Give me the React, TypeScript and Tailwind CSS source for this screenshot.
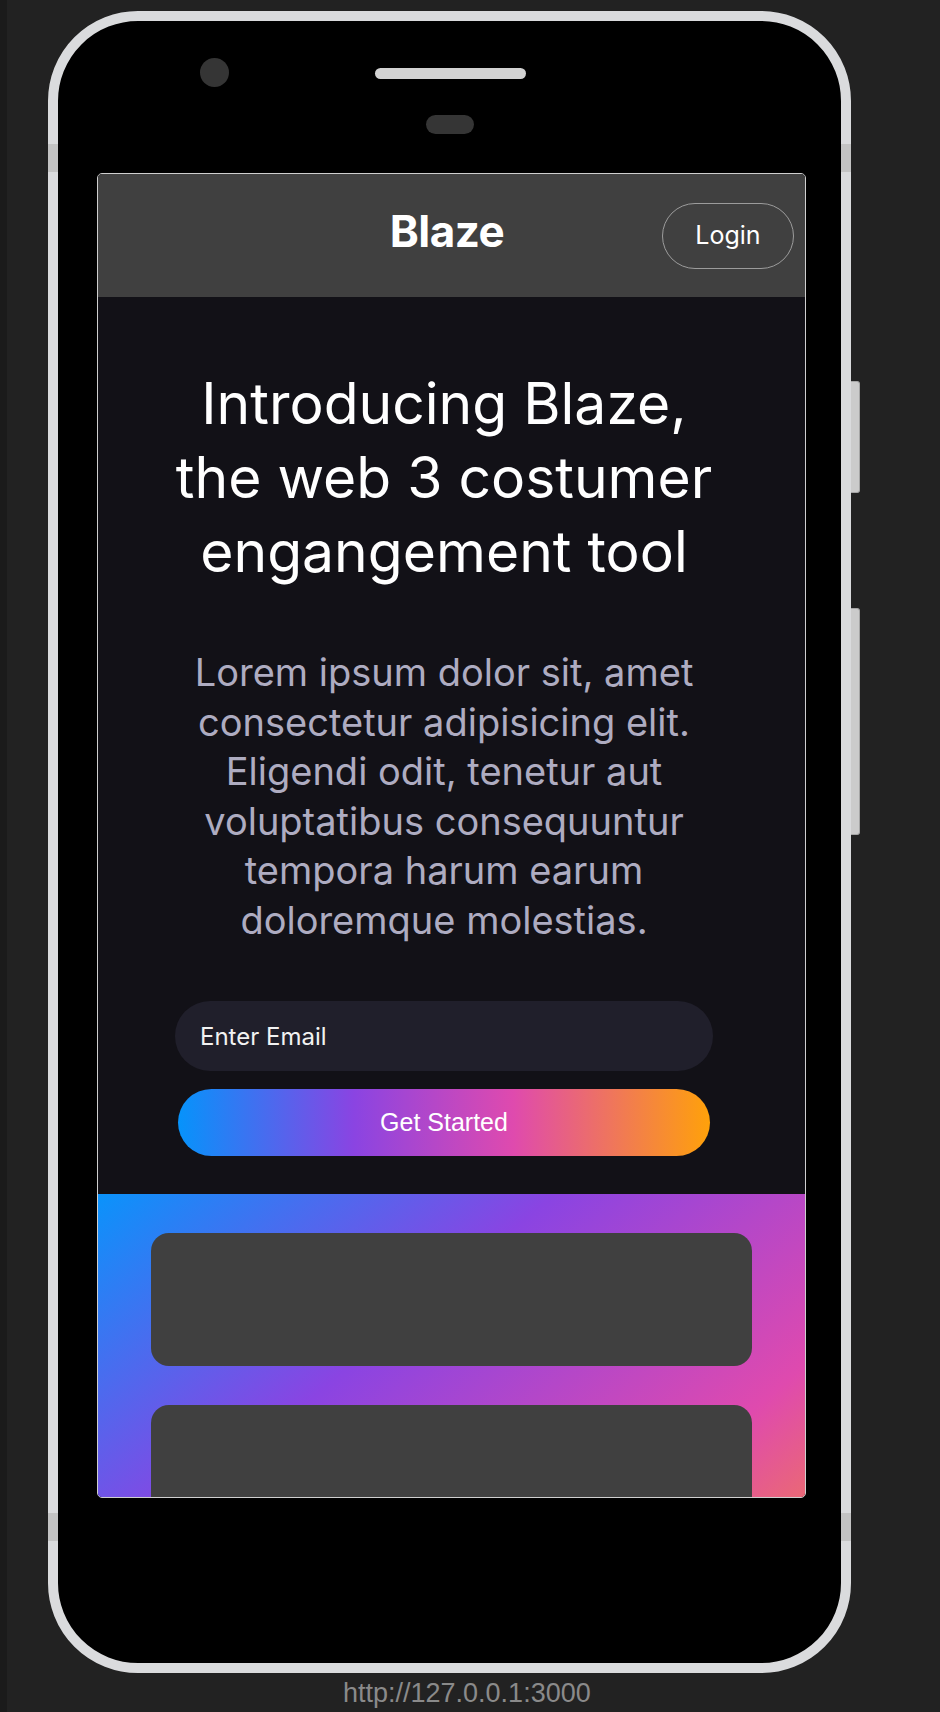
import React from "react";

function Phone() {
  return (
    <div className="relative h-[1662px] w-[803px] shrink-0 rounded-[90px] border-[10px] border-[#dadbdd] bg-black">
      {/* border notches */}
      <div className="absolute left-[-10px] top-[123px] h-[28px] w-[10px] bg-[#c3c3c3]" />
      <div className="absolute right-[-10px] top-[123px] h-[28px] w-[10px] bg-[#c3c3c3]" />
      <div className="absolute left-[-10px] top-[1492px] h-[28px] w-[10px] bg-[#c3c3c3]" />
      <div className="absolute right-[-10px] top-[1492px] h-[28px] w-[10px] bg-[#c3c3c3]" />
      {/* side buttons */}
      <div className="absolute left-[calc(100%+10px)] top-[360px] h-[112px] w-[9px] rounded-r-[3px] border border-l-0 border-[#a5a5a5] bg-[#cbcbcb]" />
      <div className="absolute left-[calc(100%+10px)] top-[587px] h-[227px] w-[9px] rounded-r-[3px] border border-l-0 border-[#a5a5a5] bg-[#cbcbcb]" />

      {/* top bezel */}
      <div className="h-[152px]">
        <div className="flex items-start pt-[37px]">
          <div className="ml-[142px] h-[29px] w-[29px] rounded-full bg-[#353535]" />
          <div className="ml-[146px] mt-[10px] h-[11px] w-[151px] rounded-full bg-[#d2d2d2]" />
        </div>
        <div className="ml-[368px] mt-[28px] h-[19px] w-[48px] rounded-full bg-[#353535]" />
      </div>

      {/* screen */}
      <div className="ml-[39px] flex h-[1325px] w-[709px] flex-col overflow-hidden rounded-[5px] border border-[#cfcfcf] bg-[#121117] font-['Inter',sans-serif]">
        <header className="grid h-[123px] shrink-0 grid-cols-[1fr_auto_1fr] items-center bg-[#404040]">
          <div />
          <div className="mb-[9px] mr-[9px] text-[44px] font-bold leading-none tracking-[-0.5px] text-white">Blaze</div>
          <button className="mr-[11px] h-[66px] w-[132px] justify-self-end rounded-full border border-[#9c9c9c] text-[25px] text-white">
            Login
          </button>
        </header>

        <section className="flex shrink-0 flex-col items-center pb-[38px] pr-[15px] pt-[70px]">
          <h1 className="whitespace-nowrap text-center text-[57px] font-normal leading-[74px] text-white">
            Introducing Blaze,
            <br />
            the web 3 costumer
            <br />
            engangement tool
          </h1>
          <p className="mt-[59px] whitespace-nowrap text-center text-[38px] leading-[49.5px] text-[#aeacc1]">
            Lorem ipsum dolor sit, amet
            <br />
            consectetur adipisicing elit.
            <br />
            Eligendi odit, tenetur aut
            <br />
            voluptatibus consequuntur
            <br />
            tempora harum earum
            <br />
            doloremque molestias.
          </p>
          <input
            type="email"
            placeholder="Enter Email"
            className="mt-[56px] h-[70px] w-[538px] rounded-full bg-[#201f2b] pl-[25px] text-[24px] text-white outline-none placeholder:text-[#f2f2f2]"
          />
          <button className="mt-[18px] h-[67px] w-[532px] rounded-full bg-[linear-gradient(90deg,#0693fb_0%,#8a44e2_33%,#df4aae_63%,#ffa10a_100%)] font-['Liberation_Sans',sans-serif] text-[25px] text-white">
            Get Started
          </button>
        </section>

        <section className="flex shrink-0 flex-col gap-[39px] bg-[linear-gradient(140deg,#0a93fb_0%,#8a44e2_33.4%,#df4aae_66.7%,#ffa20a_100%)] px-[53px] pb-[39px] pt-[39px]">
          <div className="h-[133px] rounded-[18px] bg-[#404040]" />
          <div className="h-[133px] rounded-[18px] bg-[#404040]" />
          <div className="h-[133px] rounded-[18px] bg-[#404040]" />
        </section>
      </div>
    </div>
  );
}

export default function App() {
  return (
    <div className="flex min-h-[1712px] w-full bg-[#222222]">
      <div className="w-[7px] shrink-0 bg-[#1b1b1b]" />
      <div className="flex flex-col pl-[41px] pt-[11px]">
        <Phone />
        <div className="pl-[295px] pt-[5px] font-['Liberation_Sans',sans-serif] text-[27px] leading-[30px] text-[#8a8a8a]">
          http://127.0.0.1:3000
        </div>
      </div>
    </div>
  );
}
